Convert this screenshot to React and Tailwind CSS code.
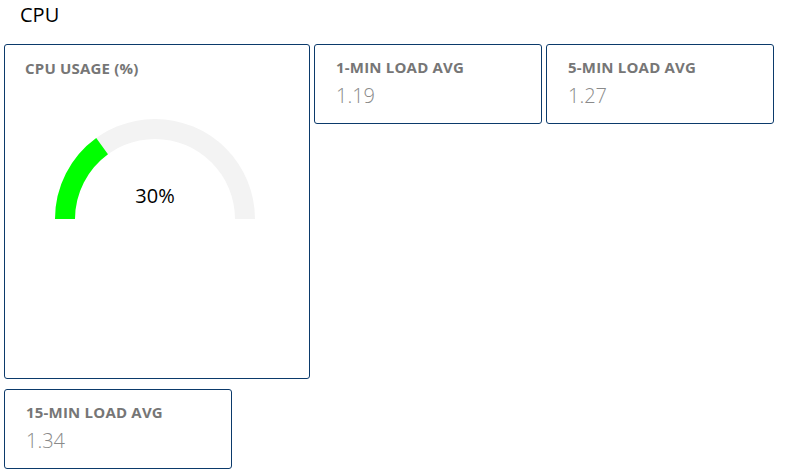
import React from 'react';

const loads = [
    { label: '1-MIN LOAD AVG', value: '1.19' },
    { label: '5-MIN LOAD AVG', value: '1.27' },
    { label: '15-MIN LOAD AVG', value: '1.34' },
];

const Gauge = ({ percent }) => {
    const a = (percent / 100) * Math.PI;
    const ox = 100 - 100 * Math.cos(a);
    const oy = 100 - 100 * Math.sin(a);
    const ix = 100 - 80 * Math.cos(a);
    const iy = 100 - 80 * Math.sin(a);
    return (
        <svg width="200" height="100" viewBox="0 0 200 100">
            <path d="M0,100 A100,100 0 0 1 200,100 L180,100 A80,80 0 0 0 20,100 Z" fill="#f3f3f3" />
            <path d={`M0,100 A100,100 0 0 1 ${ox},${oy} L${ix},${iy} A80,80 0 0 0 20,100 Z`} fill="#00ff00" />
            <text x="100" y="84" textAnchor="middle" fontSize="20" fill="#000">{percent}%</text>
        </svg>
    );
};

const Label = ({ children }) => (
    <div className="text-[15px] font-bold text-[#767676] leading-[18px] tracking-[0.2px]">{children}</div>
);

export default function App() {
    return (
        <div className="w-[785px] h-[474px] bg-white" style={{ fontFamily: '"Open Sans", "Noto Sans", sans-serif' }}>
            <h2 className="pl-[20px] pt-[1px] text-[20px] leading-[28px] text-black">CPU</h2>
            <div className="flex flex-wrap gap-x-[4px] gap-y-[10px] pl-[4px] mt-[15px]">
                <div className="w-[306px] h-[335px] border border-[#0b3a6b] rounded-[3px] pt-[14px] pl-[20px]">
                    <Label>CPU USAGE (%)</Label>
                    <div className="ml-[30px] mt-[42px]">
                        <Gauge percent={30} />
                    </div>
                </div>
                {loads.map((l) => (
                    <div key={l.label} className="w-[228px] h-[80px] border border-[#0b3a6b] rounded-[3px] pt-[13px] pl-[21px]">
                        <Label>{l.label}</Label>
                        <div className="text-[20px] font-light text-[#8a8a8a] leading-[28px] mt-[6px]">{l.value}</div>
                    </div>
                ))}
            </div>
        </div>
    );
}
